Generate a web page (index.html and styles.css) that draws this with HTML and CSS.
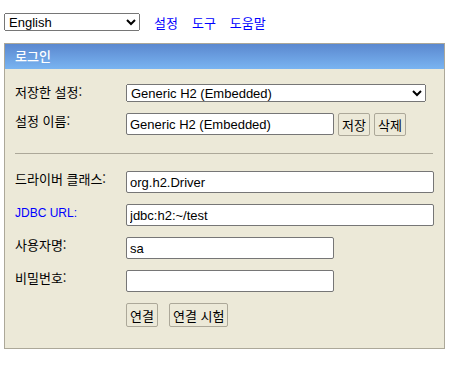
FILE: index.html
```html
<!DOCTYPE html>
<html lang="ko">
<head>
  <meta charset="UTF-8" />
  <title>H2 Console</title>
  <link rel="stylesheet" href="styles.css">
</head>
<body>
  <div class="toolbar">
    <select class="lang">
      <option>English</option>
    </select>
    <a href="#">설정</a>
    <a href="#">도구</a>
    <a href="#">도움말</a>
  </div>

  <div class="login">
    <div class="login-head">로그인</div>
    <div class="login-body">
      <div class="row first">
        <label>저장한 설정:</label>
        <select class="setting">
          <option>Generic H2 (Embedded)</option>
        </select>
      </div>
      <div class="row">
        <label>설정 이름:</label>
        <div class="inline">
          <input type="text" class="short" value="Generic H2 (Embedded)" />
          <button>저장</button>
          <button>삭제</button>
        </div>
      </div>
      <hr />
      <div class="row">
        <label>드라이버 클래스:</label>
        <input type="text" class="long" value="org.h2.Driver" />
      </div>
      <div class="row">
        <label class="link">JDBC URL:</label>
        <input type="text" class="long" value="jdbc:h2:~/test" />
      </div>
      <div class="row">
        <label>사용자명:</label>
        <input type="text" class="short" value="sa" />
      </div>
      <div class="row">
        <label>비밀번호:</label>
        <input type="password" class="short" value="" />
      </div>
      <div class="row">
        <label></label>
        <div class="inline actions">
          <button>연결</button>
          <button>연결 시험</button>
        </div>
      </div>
    </div>
  </div>
</body>
</html>
```

FILE: styles.css
```css
* {
  box-sizing: border-box;
}

body {
  margin: 0;
  padding: 13px 4px 0 4px;
  font: 12px "Liberation Sans", "Noto Sans CJK KR", sans-serif;
  background: #fff;
  color: #000;
}

.toolbar {
  display: flex;
  align-items: center;
  height: 18px;
}

.toolbar .lang {
  width: 136px;
  height: 18px;
  font: 13px "Liberation Sans", sans-serif;
  margin-right: 14px;
}

.toolbar a {
  color: #0000ff;
  text-decoration: none;
  font-family: "Noto Sans CJK KR", sans-serif;
  font-size: 13px;
  margin-right: 14px;
}

.login {
  margin-top: 12px;
  width: 441px;
  border: 1px solid #aca899;
  background: #ece9d8;
}

.login-head {
  height: 25px;
  line-height: 24px;
  padding-left: 10px;
  color: #fff;
  font-size: 13px;
  font-weight: 500;
  font-family: "Noto Sans CJK KR", sans-serif;
  background: linear-gradient(#5b88cf, #79b4f1);
}

.login-body {
  padding: 15px 11px 21px 10px;
}

.row {
  display: grid;
  grid-template-columns: 111px auto;
  align-items: start;
  margin-top: 11px;
}

.row.first {
  margin-top: 0;
}

.row label {
  font-family: "Noto Sans CJK KR", sans-serif;
  font-size: 13px;
  line-height: 16px;
  color: #000;
}

.row label.link {
  color: #0000ff;
  font-family: "Liberation Sans", sans-serif;
  font-size: 12px;
  padding-top: 1px;
}

.setting {
  width: 300px;
  height: 18px;
  font: 13px "Liberation Sans", sans-serif;
}

input {
  height: 22px;
  font: 13px "Liberation Sans", sans-serif;
  padding: 1px 3px;
  border: 1px solid #767676;
  border-radius: 2px;
  background: #fff;
}

input.short {
  width: 208px;
}

input.long {
  width: 308px;
}

.inline {
  display: flex;
  align-items: flex-start;
  gap: 4px;
}

.inline button {
  height: 23px;
}

.actions {
  gap: 11px;
}

.actions button {
  height: 24px;
}

button {
  font-family: "Noto Sans CJK KR", sans-serif;
  font-size: 13px;
  padding: 0 3px;
  background: #ece9d8;
  border: 1px solid #aca899;
  border-radius: 2px;
  color: #000;
}

hr {
  border: none;
  border-top: 1px solid #aca899;
  margin: 17px 0 17px 0;
  width: 418px;
}
```
